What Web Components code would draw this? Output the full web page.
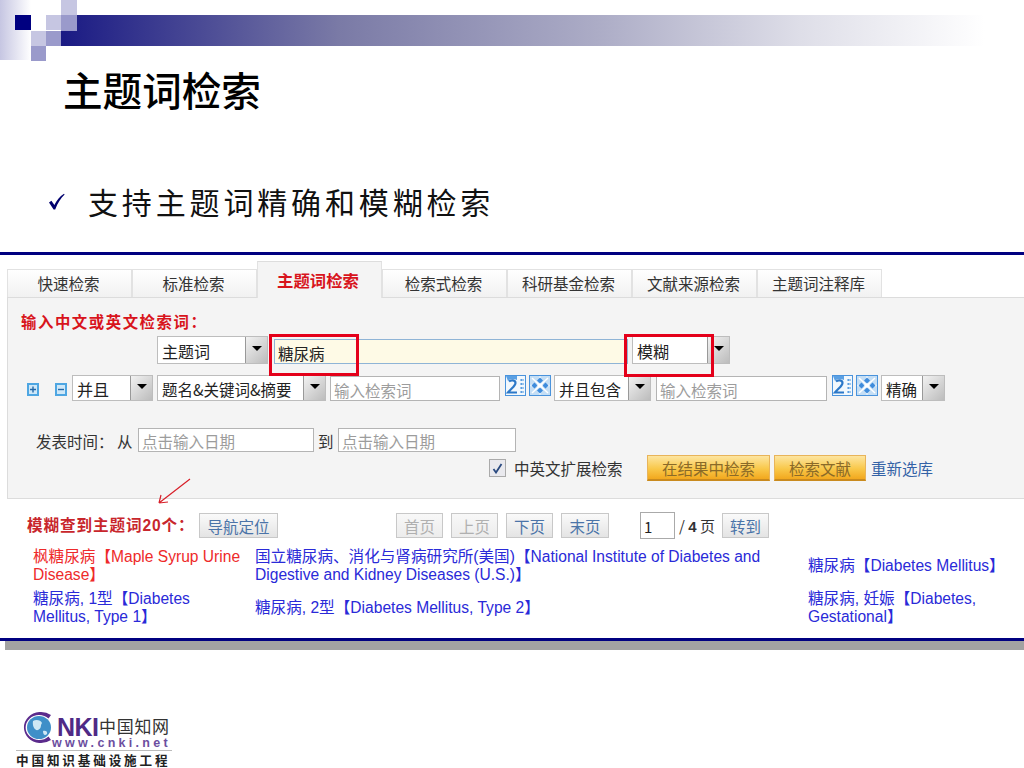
<!DOCTYPE html>
<html lang="zh">
<head>
<meta charset="utf-8">
<title>主题词检索</title>
<style>
  html, body { margin: 0; padding: 0; background: #fff; }
  body { width: 1024px; height: 768px; overflow: hidden; font-family: "Liberation Sans", "Noto Sans CJK SC", sans-serif; }
</style>
</head>
<body>
<slide-page>
  <search-shot></search-shot>
</slide-page>

<script>
const CJK = '"Noto Sans CJK SC", "Liberation Sans", sans-serif';

class SlidePage extends HTMLElement {
    constructor() {
        super();
        this.attachShadow({ mode: 'open' }).innerHTML = `
            <style>
                :host { display: block; width: 1024px; height: 768px; position: relative; background: #fff; }
                svg { display: block; }
                h1 { margin: 1px 0 0 63px; font: 500 39.6px/52px ${CJK}; color: #000; }
                .point { display: flex; align-items: center; margin: 61px 0 0 48px; height: 50px; }
                .point svg { flex: none; margin-right: 23px; }
                .point span { font: 400 30px/50px ${CJK}; letter-spacing: 3.85px; color: #111; }
                .shadow { height: 9px; margin-left: 5px; background: #a2a2a2; }
                slide-logo { margin: 58px 0 0 16px; }
            </style>
            <svg width="1024" height="62" viewBox="0 0 1024 62">
                <defs>
                    <linearGradient id="bar" x1="0" x2="1" y1="0" y2="0">
                        <stop offset="0" stop-color="#1a1a84"/>
                        <stop offset="0.3" stop-color="#7a7aa6"/>
                        <stop offset="0.58" stop-color="#acacc6"/>
                        <stop offset="0.8" stop-color="#dedee8"/>
                        <stop offset="1" stop-color="#ffffff"/>
                    </linearGradient>
                    <linearGradient id="fade" x1="0" x2="1" y1="0" y2="0">
                        <stop offset="0" stop-color="#c6c6e2"/>
                        <stop offset="1" stop-color="#ffffff"/>
                    </linearGradient>
                </defs>
                <rect x="0" y="0" width="31" height="60" fill="url(#fade)"/>
                <rect x="61" y="31" width="16" height="15" fill="#1a1a84"/>
                <path d="M77 15H985V46H61V31H77Z" fill="url(#bar)"/>
                <rect x="15" y="15" width="16" height="15" fill="#000080"/>
                <rect x="46" y="15" width="15" height="15" fill="#c6c6e2"/>
                <rect x="61" y="15" width="16" height="16" fill="#9a9acb"/>
                <rect x="61" y="0" width="16" height="15" fill="#c6c6e2"/>
                <rect x="31" y="31" width="15" height="15" fill="#c6c6e2"/>
                <rect x="46" y="31" width="15" height="15" fill="#9a9acb"/>
                <rect x="31" y="46" width="15" height="15" fill="#9a9acb"/>
            </svg>
            <h1>主题词检索</h1>
            <div class="point">
                <svg width="17" height="17" viewBox="0 0 17 17"><path d="M1 9.5 L3.4 7.8 L6.4 12 C8.6 7.6 11.6 3.6 16 .8 L16.6 1.6 C12.6 5.4 9.8 10 7.2 16.4 L5.6 16.6 Z" fill="#00006e"/></svg>
                <span>支持主题词精确和模糊检索</span>
            </div>
            <slot></slot>
            <div class="shadow"></div>
            <slide-logo></slide-logo>
        `;
    }
}

class SlideLogo extends HTMLElement {
    constructor() {
        super();
        this.attachShadow({ mode: 'open' }).innerHTML = `
            <style>
                :host { display: block; width: 156px; color: #5b2b8c; }
                .top { display: flex; align-items: flex-start; height: 29px; }
                svg { flex: none; margin: 3px 0 -7px 2px; }
                .nki { flex: none; font: 700 25px/20px "Liberation Sans", sans-serif; letter-spacing: -.5px; margin: 9px 0 0 3px; width: 42px; color: #4f2a86; }
                .cn { flex: none; font: 400 17px/22px ${CJK}; letter-spacing: .7px; margin-top: 7px; color: #333; white-space: nowrap; }
                .web { font: 700 12.5px/12px "Liberation Sans", sans-serif; letter-spacing: 3.3px; margin: 0 0 0 36px; color: #6c4ea0; white-space: nowrap; }
                .rule { height: 1px; background: #bbb; margin-top: 1px; }
                .name { font: 700 12.6px/13px ${CJK}; letter-spacing: 2.85px; margin-top: 2px; color: #222; white-space: nowrap; }
            </style>
            <div class="top">
                <svg width="36" height="33" viewBox="0 0 36 33">
                    <ellipse cx="21" cy="16.5" rx="12" ry="11.5" fill="#3f8fc8"/>
                    <path d="M15 10 C18 8 23 9 24 12 C22 15 24 17 20 19 C17 20 14 15 15 10Z M25 20 C27 19 30 20 29 23 C27 25 25 24 25 20Z" fill="#cfe8f4"/>
                    <path d="M33 4 A17 15.5 0 1 0 33 29 L30.5 25.5 A13.5 12.5 0 1 1 30.5 7.5 Z" fill="#5b2b8c"/>
                </svg>
                <span class="nki">NKI</span>
                <span class="cn">中国知网</span>
            </div>
            <div class="web">www.cnki.net</div>
            <div class="rule"></div>
            <div class="name">中国知识基础设施工程</div>
        `;
    }
}

class SearchShot extends HTMLElement {
    constructor() {
        super();
        this.attachShadow({ mode: 'open' }).innerHTML = `
            <style>
                :host { display: block; position: relative; margin-top: 26px; height: 383px; border-top: 3px solid #000080; border-bottom: 3px solid #000080; background: #fff; font-family: ${CJK}; }
                .tabs { display: flex; align-items: flex-end; height: 42px; margin: 0 0 0 7px; }
                .panel { margin-left: 7px; height: 202px; box-sizing: border-box; background: #f4f4f4; border: 1px solid #dcdcdc; border-right: 0; position: relative; }
                .hint { font: 700 15.4px/20px ${CJK}; letter-spacing: 1.55px; color: #d8141c; padding: 13px 0 0 13px; height: 25px; }
                .row { display: flex; align-items: flex-end; white-space: nowrap; }
                .r1 { margin: 0 0 0 149px; height: 28px; }
                .r2 { margin: 11px 0 0 19px; height: 26px; }
                .r3 { margin: 27px 0 0 28px; height: 24px; font-size: 15.5px; color: #333; }
                .r4 { margin: 3px 0 0 481px; height: 26px; align-items: center; font-size: 15.5px; color: #333; }
                .sp { flex: none; }
                .link { color: #3362a6; font-size: 15.5px; margin-left: 5px; }
                .icon { flex: none; display: block; }
                .check { width: 15px; height: 16px; border: 1px solid #aaa; background: #e9e9ee; margin-right: 8px; display: flex; align-items: center; justify-content: center; }
                .found { display: flex; align-items: center; height: 25px; margin: 14px 0 0 27px; white-space: nowrap; }
                .found > b { font: 700 15.6px/25px "Liberation Sans", ${CJK}; letter-spacing: .9px; color: #c8262c; width: 172px; }
                .page { font-size: 15px; color: #333; }
                .page b { font-family: "Liberation Sans", sans-serif; }
                .num { width: 33px; height: 25px; border: 1px solid #aaa; background: #fff; font-size: 15px; line-height: 27px; text-indent: 3px; color: #222; }
                .terms { display: grid; grid-template-columns: 212px 543px 200px; column-gap: 10px; grid-auto-rows: 37px; row-gap: 5px; margin: 9px 0 0 33px; align-items: center; }
                .mark { position: absolute; box-sizing: border-box; border: 3px solid #e4001a; pointer-events: none; }
                .arrow { position: absolute; left: 155px; top: 222px; }
            </style>
            <div class="tabs">
                <panel-tab>快速检索</panel-tab>
                <panel-tab>标准检索</panel-tab>
                <panel-tab active>主题词检索</panel-tab>
                <panel-tab>检索式检索</panel-tab>
                <panel-tab>科研基金检索</panel-tab>
                <panel-tab>文献来源检索</panel-tab>
                <panel-tab>主题词注释库</panel-tab>
            </div>
            <div class="panel">
                <div class="hint">输入中文或英文检索词：</div>
                <div class="row r1">
                    <drop-select style="width:111px;height:28px">主题词</drop-select>
                    <span class="sp" style="width:6px"></span>
                    <text-box style="width:354px;height:25px" tone="active">糖尿病</text-box>
                    <span class="sp" style="width:4px"></span>
                    <drop-select style="width:98px;height:28px">模糊</drop-select>
                </div>
                <div class="row r2">
                    <svg class="icon" width="12" height="13" viewBox="0 0 12 13" style="margin-bottom:5px"><rect width="12" height="13" fill="#4ea6e2"/><rect x="2" y="2" width="8" height="9" fill="#cfe8f8"/><path d="M3 6.5H9M6 3.5V9.5" stroke="#2468a8" stroke-width="1.4"/></svg>
                    <span class="sp" style="width:16px"></span>
                    <svg class="icon" width="12" height="13" viewBox="0 0 12 13" style="margin-bottom:5px"><rect width="12" height="13" fill="#4ea6e2"/><rect x="2" y="2" width="8" height="9" fill="#cfe8f8"/><path d="M3 6.5H9" stroke="#2468a8" stroke-width="1.4"/></svg>
                    <span class="sp" style="width:5px"></span>
                    <drop-select style="width:81px;height:26px">并且</drop-select>
                    <span class="sp" style="width:4px"></span>
                    <drop-select style="width:169px;height:26px" tight>题名&amp;关键词&amp;摘要</drop-select>
                    <span class="sp" style="width:4px"></span>
                    <text-box style="width:170px;height:25px" tone="hint">输入检索词</text-box>
                    <span class="sp" style="width:5px"></span>
                    <tool-icons></tool-icons>
                    <span class="sp" style="width:3px"></span>
                    <drop-select style="width:97px;height:26px" tight>并且包含</drop-select>
                    <span class="sp" style="width:5px"></span>
                    <text-box style="width:171px;height:25px" tone="hint">输入检索词</text-box>
                    <span class="sp" style="width:5px"></span>
                    <tool-icons></tool-icons>
                    <span class="sp" style="width:3px"></span>
                    <drop-select style="width:64px;height:26px" tight>精确</drop-select>
                </div>
                <div class="row r3">
                    <span style="width:102px">发表时间：&nbsp;从</span>
                    <text-box style="width:176px;height:24px;line-height:24px" tone="hint">点击输入日期</text-box>
                    <span style="width:24px;text-indent:4px">到</span>
                    <text-box style="width:178px;height:24px;line-height:24px" tone="hint">点击输入日期</text-box>
                </div>
                <div class="row r4">
                    <span class="check"><svg width="11" height="11" viewBox="0 0 11 11"><path d="M1.5 6 L4 9.5 L9.5 1" fill="none" stroke="#2a4a80" stroke-width="1.8"/></svg></span>
                    <span style="width:133px">中英文扩展检索</span>
                    <gold-button style="width:123px">在结果中检索</gold-button>
                    <span class="sp" style="width:4px"></span>
                    <gold-button style="width:92px">检索文献</gold-button>
                    <span class="link">重新选库</span>
                </div>
            </div>
            <div class="found">
                <b>模糊查到主题词20个：</b>
                <pager-button style="width:79px">导航定位</pager-button>
                <span class="sp" style="width:118px"></span>
                <pager-button style="width:47px" off>首页</pager-button>
                <span class="sp" style="width:8px"></span>
                <pager-button style="width:47px" off>上页</pager-button>
                <span class="sp" style="width:8px"></span>
                <pager-button style="width:47px">下页</pager-button>
                <span class="sp" style="width:8px"></span>
                <pager-button style="width:48px">末页</pager-button>
                <span class="sp" style="width:31px"></span>
                <span class="num">1</span>
                <span class="page" style="width:47px;text-indent:4px">/ <b>4</b> 页</span>
                <pager-button style="width:47px">转到</pager-button>
            </div>
            <div class="terms">
                <term-link hot>枫糖尿病【Maple Syrup Urine Disease】</term-link>
                <term-link>国立糖尿病、消化与肾病研究所(美国)【National Institute of Diabetes and Digestive and Kidney Diseases (U.S.)】</term-link>
                <term-link>糖尿病【Diabetes Mellitus】</term-link>
                <term-link>糖尿病, 1型【Diabetes Mellitus, Type 1】</term-link>
                <term-link>糖尿病, 2型【Diabetes Mellitus, Type 2】</term-link>
                <term-link>糖尿病, 妊娠【Diabetes, Gestational】</term-link>
            </div>
            <div class="mark" style="left:269px;top:79px;width:90px;height:42px"></div>
            <div class="mark" style="left:624px;top:79px;width:90px;height:43px"></div>
            <svg class="arrow" width="38" height="30" viewBox="0 0 38 30"><path d="M35 2 L4 26 M4 26 L6 18 M4 26 L13 25" fill="none" stroke="#d8202a" stroke-width="1.2"/></svg>
        `;
    }
}

class PanelTab extends HTMLElement {
    constructor() {
        super();
        this.attachShadow({ mode: 'open' }).innerHTML = `
            <style>
                :host { display: flex; align-items: center; justify-content: center; box-sizing: border-box; flex: none; width: 125px; height: 28px; padding: 0 2px 2px 0; border: 1px solid #e2e2e2; border-bottom: 0; background: linear-gradient(#fff, #f1f1f1); font-size: 15.5px; color: #333; font-family: ${CJK}; }
                :host([active]) { height: 37px; margin-bottom: -1px; position: relative; z-index: 1; background: #f4f4f4; align-items: flex-start; padding: 6px 3px 0 0; color: #d8141c; font-weight: 700; font-size: 16.4px; border-top-color: #ddd; }
            </style>
            <slot></slot>
        `;
    }
}

class DropSelect extends HTMLElement {
    constructor() {
        super();
        this.attachShadow({ mode: 'open' }).innerHTML = `
            <style>
                :host { display: flex; flex: none; box-sizing: border-box; border: 1px solid #bdbdbd; background: #fff; font-size: 16px; color: #222; white-space: nowrap; }
                .text { flex: 1; display: flex; align-items: center; padding: 1px 0 0 4px; overflow: hidden; }
                :host([tight]) .text { font-size: 15.5px; }
                .btn { flex: none; width: 22px; border-left: 1px solid #999; background: linear-gradient(135deg, #f2f2f2, #bcbcbc); display: flex; align-items: center; justify-content: center; box-sizing: border-box; }
                .btn i { display: block; width: 0; height: 0; border: 5px solid transparent; border-top: 5px solid #000; border-bottom: 0; margin-bottom: 3px; }
            </style>
            <span class="text"><slot></slot></span>
            <span class="btn"><i></i></span>
        `;
    }
}

class TextBox extends HTMLElement {
    constructor() {
        super();
        this.attachShadow({ mode: 'open' }).innerHTML = `
            <style>
                :host { display: block; flex: none; box-sizing: border-box; border: 1px solid #b4b4b4; background: #fff; font-size: 15.5px; line-height: 26px; padding-left: 3px; color: #222; white-space: nowrap; overflow: hidden; }
                :host([tone="hint"]) { color: #9c9c9c; }
                :host([tone="active"]) { background: #fefae6; border-color: #8fb4d6; }
            </style>
            <slot></slot>
        `;
    }
}

class ToolIcons extends HTMLElement {
    constructor() {
        super();
        this.attachShadow({ mode: 'open' }).innerHTML = `
            <style>
                :host { display: flex; flex: none; gap: 3px; width: 46px; align-self: flex-start; }
                svg { display: block; }
            </style>
            <svg width="21" height="21" viewBox="0 0 21 21">
                <rect x=".5" y=".5" width="20" height="20" fill="#f2f8fd" stroke="#4a93dc"/>
                <path d="M1 1H12V5C9 3.5 5 3.5 3 6Z" fill="#5aa0e4"/>
                <path d="M4 6.5C6 4.5 10.5 5 10.5 8C10.5 11 6 13.5 3 17.5H12" fill="none" stroke="#2c78c8" stroke-width="2.2"/>
                <path d="M15.5 5h3M15.5 9h3M15.5 13h3M15.5 17h3" stroke="#4a93dc" stroke-width="1.8" stroke-dasharray="1.4 .6"/>
            </svg>
            <svg width="22" height="21" viewBox="0 0 22 21">
                <rect x=".5" y=".5" width="21" height="20" fill="#c4def5" stroke="#4a93dc"/>
                <path d="M11 1.5V19.5M1.5 10.5H20.5M3 3L19 18M19 3L3 18" stroke="#fff" stroke-width="1.5"/>
                <path d="M11 2.5L14 5.5L11 8.5L8 5.5ZM11 12.5L14 15.5L11 18.5L8 15.5ZM5.5 7.5L8.5 10.5L5.5 13.5L2.5 10.5ZM16.5 7.5L19.5 10.5L16.5 13.5L13.5 10.5Z" fill="#3f8cdc"/>
            </svg>
        `;
    }
}

class GoldButton extends HTMLElement {
    constructor() {
        super();
        this.attachShadow({ mode: 'open' }).innerHTML = `
            <style>
                :host { display: flex; flex: none; align-items: center; justify-content: center; box-sizing: border-box; height: 26px; border: 1px solid #e8b45a; border-bottom: 2px solid #c98a1e; background: linear-gradient(#fde5a0, #f9c84a 55%, #f2a81e); font-size: 15.5px; color: #8a6a28; }
            </style>
            <slot></slot>
        `;
    }
}

class PagerButton extends HTMLElement {
    constructor() {
        super();
        this.attachShadow({ mode: 'open' }).innerHTML = `
            <style>
                :host { display: flex; flex: none; align-items: center; justify-content: center; box-sizing: border-box; height: 25px; border: 1px solid #c8c8c8; background: linear-gradient(#fafafa, #e4e4e4); font-size: 15.5px; color: #4b74a8; }
                :host([off]) { color: #b0b0b0; background: linear-gradient(#f8f8f8, #ececec); }
            </style>
            <slot></slot>
        `;
    }
}

class TermLink extends HTMLElement {
    constructor() {
        super();
        this.attachShadow({ mode: 'open' }).innerHTML = `
            <style>
                :host { display: block; font: 400 15.6px/18px "Liberation Sans", "Noto Sans CJK SC", sans-serif; color: #2a2ad8; }
                :host([hot]) { color: #ee2a2a; }
            </style>
            <slot></slot>
        `;
    }
}

customElements.define('slide-page', SlidePage);
customElements.define('slide-logo', SlideLogo);
customElements.define('search-shot', SearchShot);
customElements.define('panel-tab', PanelTab);
customElements.define('drop-select', DropSelect);
customElements.define('text-box', TextBox);
customElements.define('tool-icons', ToolIcons);
customElements.define('gold-button', GoldButton);
customElements.define('pager-button', PagerButton);
customElements.define('term-link', TermLink);
</script>
</body>
</html>
